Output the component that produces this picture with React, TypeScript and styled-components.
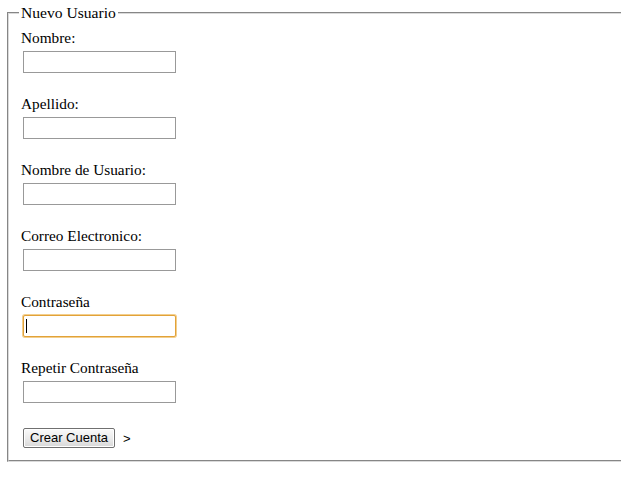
import React from "react";
import styled, { createGlobalStyle } from "styled-components";

const Global = createGlobalStyle`
  html, body { margin: 0; padding: 0; background: #fff; overflow: hidden; }
  body { font-family: "Liberation Serif", "Times New Roman", serif; font-size: 15.3px; color: #000; }
`;

const Fieldset = styled.fieldset`
  margin: 4px -20px 0 7px;
  padding: 7px 12px 12px 12px;
  border: 2px groove #dadada;
  min-width: 0;
`;

const Legend = styled.legend`
  margin-left: -2px;
  padding: 0 2px;
  line-height: 18px;
  font-size: 15.6px;
`;

const Field = styled.div`
  display: flex;
  flex-direction: column;
  align-items: flex-start;
  margin-bottom: 22px;
`;

const Label = styled.label`
  display: block;
  line-height: 18px;
  height: 18px;
`;

const InputWrap = styled.div`
  position: relative;
  margin: 4px 0 0 2px;
`;

const Input = styled.input<{ $focused?: boolean }>`
  box-sizing: border-box;
  display: block;
  width: 153px;
  height: 22px;
  margin: 0;
  padding: 1px 2px;
  font-family: "Liberation Sans", Arial, sans-serif;
  font-size: 13px;
  background: #fff;
  outline: none;
  border: 1px solid ${(p) => (p.$focused ? "#e2a239" : "#999")};
  border-radius: ${(p) => (p.$focused ? "2px" : "0")};
  box-shadow: ${(p) => (p.$focused ? "0 0 0 1px #f3cf8e" : "none")};
`;

const Caret = styled.span`
  position: absolute;
  left: 3px;
  top: 4px;
  width: 1px;
  height: 14px;
  background: #000;
`;

const Actions = styled.div`
  display: flex;
  align-items: center;
  gap: 8px;
  margin: 25px 0 0 2px;
`;

const Button = styled.button`
  box-sizing: border-box;
  height: 20px;
  padding: 0 6px;
  white-space: nowrap;
  font-family: "Liberation Sans", Arial, sans-serif;
  font-size: 13px;
  line-height: 16px;
  color: #000;
  border: 1px solid #707070;
  border-radius: 2px;
  background: linear-gradient(#fafafa, #ececec 50%, #d8d8d8);
  box-shadow: inset 0 0 0 1px #fff;
`;

const Arrow = styled.span`
  font-family: "Liberation Sans", Arial, sans-serif;
  font-size: 13px;
`;

const fields = [
  { label: "Nombre:", type: "text" },
  { label: "Apellido:", type: "text" },
  { label: "Nombre de Usuario:", type: "text" },
  { label: "Correo Electronico:", type: "text" },
  { label: "Contraseña", type: "password", focused: true },
  { label: "Repetir Contraseña", type: "password" },
];

export default function App() {
  return (
    <>
      <Global />
      <form onSubmit={(e) => e.preventDefault()}>
        <Fieldset>
          <Legend>Nuevo Usuario</Legend>
          {fields.map((f) => (
            <Field key={f.label}>
              <Label>{f.label}</Label>
              <InputWrap>
                <Input type={f.type} $focused={f.focused} />
                {f.focused && <Caret />}
              </InputWrap>
            </Field>
          ))}
          <Actions>
            <Button type="submit">Crear Cuenta</Button>
            <Arrow>&gt;</Arrow>
          </Actions>
        </Fieldset>
      </form>
    </>
  );
}
